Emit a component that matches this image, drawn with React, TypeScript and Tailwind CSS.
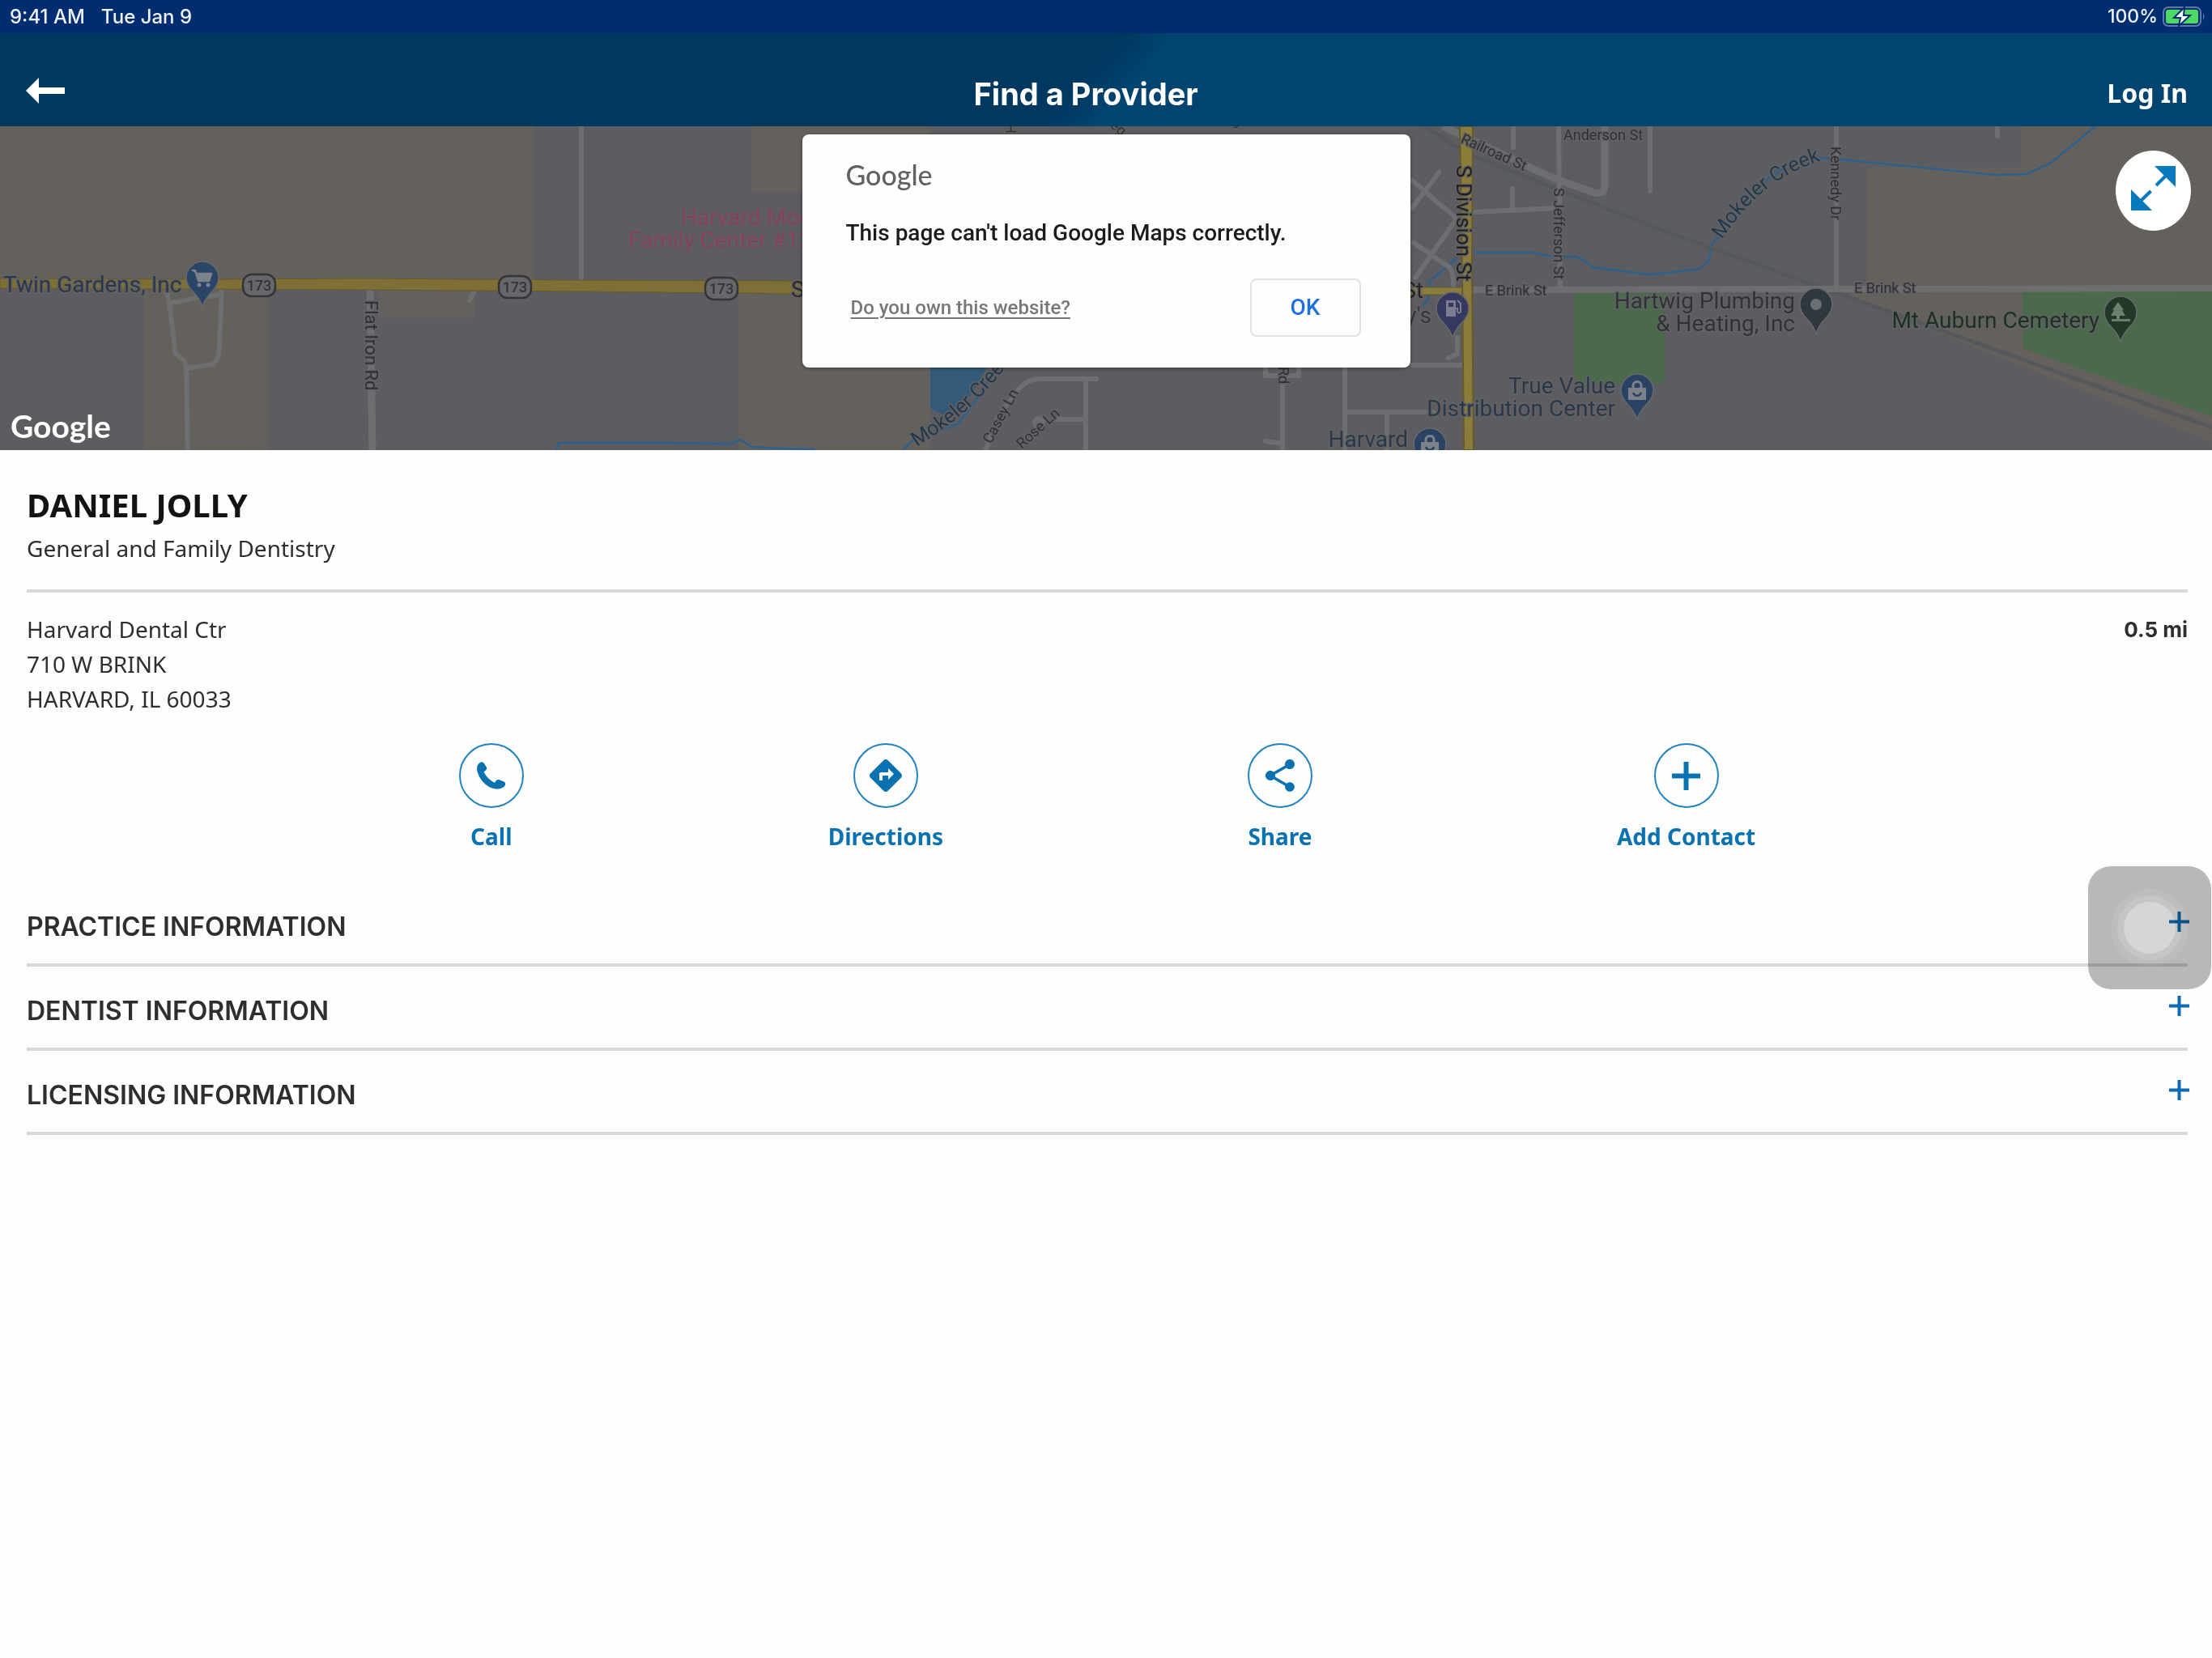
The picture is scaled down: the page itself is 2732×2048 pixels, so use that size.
import React from "react";
import { MdDirections, MdShare } from "react-icons/md";

const FIELD = "#64605c";
const ROAD = "#6c6e70";
const CREEK = "#2c618d";
const YELLOW = "#7d6f36";

function Pin({ x, y, color, children }: { x: number; y: number; color: string; children?: React.ReactNode }) {
  return (
    <g transform={`translate(${x} ${y})`}>
      <path
        d="M0 -20C-11 -20 -20 -11 -20 0C-20 7 -17 12 -12 17C-6 23 -3 27 0 36C3 27 6 23 12 17C17 12 20 7 20 0C20 -11 11 -20 0 -20Z"
        fill={color}
        stroke="#68696c"
        strokeWidth="1.5"
      />
      {children}
    </g>
  );
}

function BagGlyph() {
  return (
    <g>
      <path d="M-11 -3H11V12H-11Z" fill="#7d828a" />
      <path d="M-5 -3V-6C-5 -12 5 -12 5 -6V-3" fill="none" stroke="#7d828a" strokeWidth="3" />
      <path d="M-5 3C-3 8 3 8 5 3" fill="none" stroke="#2a4264" strokeWidth="2.5" />
    </g>
  );
}

function Shield({ x, y }: { x: number; y: number }) {
  return (
    <g>
      <rect x={x - 20} y={y - 13} width="40" height="27" rx="11" fill="#66676a" stroke="#343537" strokeWidth="2.5" />
      <text x={x} y={y + 7} textAnchor="middle" fontSize="18" fontWeight="500" fill="#333437">
        173
      </text>
    </g>
  );
}

function MapCanvas() {
  return (
    <svg
      className="block h-full w-full"
      viewBox="0 156 2732 400"
      preserveAspectRatio="xMidYMid slice"
      fontFamily="Roboto, sans-serif"
      role="img"
      aria-label="Map"
    >
      <defs>
        <path id="creek-east" d="M2127 296C2150 262 2182 217 2260 195" />
        <path id="creek-south" d="M1132 552C1178 522 1208 502 1260 430" />
      </defs>
      <rect x="0" y="156" width="2732" height="400" fill="#5d5d61" />
      <g fill={FIELD}>
        <rect x="0" y="156" width="660" height="190" />
        <rect x="178" y="356" width="153" height="200" />
        <rect x="467" y="356" width="119" height="37" />
        <rect x="928" y="156" width="222" height="81" />
        <rect x="912" y="360" width="237" height="196" />
        <path d="M2496 156H2732V354H2306V207H2496Z" />
        <path d="M2266 360H2732V546Z" />
      </g>
      <g fill="#4b6a4b">
        <path d="M1944 362H2056V466Q2056 474 2048 474H1958Q1944 474 1944 460Z" />
        <path d="M2498 360H2732V514L2498 430Z" />
      </g>
      <path d="M1149 440H1224L1218 456L1193 497Q1180 508 1166 512Q1154 510 1149 503Z" fill="#345a7a" />
      <g fill="none" stroke={CREEK} strokeWidth="2.5">
        <path d="M687 556L690 547H814L903 548L914 543L928 552L966 554L1006 555" />
        <path d="M1115 556L1126 545L1184 523L1211 487L1225 463" />
        <path d="M1820 312H1891L1918 317L1945 317L1954 320L1967 330L2036 339L2060 337L2099 332L2110 323L2115 300L2184 221L2211 202L2246 195L2273 197L2465 216L2503 215L2532 202L2588 156" />
        <path d="M1800 318L1766 347L1764 370L1757 377" />
      </g>
      <g fill="none" stroke="#55585c" strokeWidth="5">
        <path d="M1760 156L1812 190L2060 287L2255 357L2732 528" />
      </g>
      <g fill="none" stroke={ROAD} strokeWidth="6" strokeLinejoin="round" strokeLinecap="round">
        <path d="M206 361L209 375L217 437L228 446L230 455L232 560" />
        <path d="M274 354L271 429Q270 446 262 450L230 455" />
        <path d="M209 375L243 368L272 364" />
        <path d="M586 359L580 371" />
        <path d="M718 150V347" />
        <path d="M1354 468H1285Q1268 468 1256 483L1232 516L1216 560" />
        <path d="M1341 468V560M1305 518H1341" />
        <path d="M1744 257L1777 213M1744 223L1797 268M1746 300L1790 330Q1795 335 1795 353M1748 343L1797 273" />
        <path d="M1869 150V182M2038 150V236M1868 233V258M1820 262L1925 257" />
        <path d="M1800 417V437L1789 442M1744 451H1806M1661 450V560M1663 509H1770M1713 512V560" />
        <path d="M1584 470V560M1563 450V464H1604V450M1563 545L1584 548" />
        <path d="M2467 150V168M2268 150V357M1925 150L1927 357" />
      </g>
      <g fill="none" stroke={ROAD} strokeWidth="9" strokeLinejoin="round">
        <path d="M457 350L460 560" />
        <path d="M1782 156L1918 220L1969 238Q1981 240 1982 231V150" />
        <path d="M1820 358L2732 356" strokeWidth="8" />
      </g>
      <circle cx="1283" cy="522" r="8" fill={ROAD} />
      <path d="M0 344L250 345L450 344L718 346L992 347V363L718 360L450 358L0 356Z" fill={YELLOW} stroke="#66592b" strokeWidth="1" />
      <path d="M1740 355H1806V364H1740Z" fill="#8a7c3a" stroke="#66592b" strokeWidth="1" />
      <path d="M1803 156H1819L1818 330L1820 556H1808L1806 340Z" fill="#8a7c3a" stroke="#66592b" strokeWidth="2" />
      <Shield x={320} y={352} />
      <Shield x={636} y={354} />
      <Shield x={891} y={356} />

      <g stroke="#626266" strokeWidth="3" paintOrder="stroke" strokeLinejoin="round">
        <g fontSize="28">
          <text x="4" y="361" fill="#2b3947">Twin Gardens, Inc</text>
          <g fill="#86405f" strokeWidth="1">
            <text x="841" y="278">Harvard Moo</text>
            <text x="776" y="306">Family Center #12</text>
          </g>
          <text x="977" y="367" fill="#2c2b2c">S</text>
          <text x="1758" y="368" textAnchor="end" fill="#26251f">St</text>
          <text x="1768" y="399" textAnchor="end" fill="#34353f">y's</text>
          <g textAnchor="end">
            <text x="2217" y="381" fill="#2f3337">Hartwig Plumbing</text>
            <text x="2217" y="409" fill="#2f3337">&amp; Heating, Inc</text>
            <text x="1995" y="486" fill="#2a3848">True Value</text>
            <text x="1995" y="514" fill="#2a3848">Distribution Center</text>
            <text x="1739" y="552" fill="#2a3848">Harvard</text>
            <text x="2593" y="405" fill="#1d3122">Mt Auburn Cemetery</text>
          </g>
        </g>
        <g fontSize="18" fill="#2f3032">
          <text x="1834" y="365">E Brink St</text>
          <text x="2290" y="362">E Brink St</text>
          <text x="1931" y="173">Anderson St</text>
          <text transform="translate(1803 176) rotate(24)">Railroad St</text>
          <text transform="translate(1919 232) rotate(90)">S Jefferson St</text>
          <text transform="translate(2261 181) rotate(90)">Kennedy Dr</text>
          <text transform="translate(1579 453) rotate(90)">Rd</text>
          <text transform="translate(1224 549) rotate(-62)">Casey Ln</text>
          <text transform="translate(1262 555) rotate(-42)">Rose Ln</text>
          <text transform="translate(1242 152) rotate(90)">H</text>
          <text transform="translate(1370 156) rotate(40)">eg</text>
          <text transform="translate(1524 160) rotate(-35)">s</text>
        </g>
        <text transform="translate(451 371) rotate(90)" fontSize="22" fill="#2f3032">Flat Iron Rd</text>
        <text transform="translate(1799 204) rotate(90)" fontSize="26" fill="#1f1f1c">S Division St</text>
        <g fontSize="25" fill="#24384a">
          <text><textPath href="#creek-east">Mokeler Creek</textPath></text>
          <text><textPath href="#creek-south">Mokeler Creek</textPath></text>
        </g>
      </g>

      <Pin x={250} y={343} color="#2a4568">
        <path d="M-13 -9H-9L-5 4H8L11 -5H-7" fill="#7d828a" stroke="#7d828a" strokeWidth="2.5" strokeLinejoin="round" />
        <circle cx="-4" cy="9" r="2.5" fill="#7d828a" />
        <circle cx="7" cy="9" r="2.5" fill="#7d828a" />
      </Pin>
      <Pin x={1794} y={381} color="#37385f">
        <path d="M-8 -10H4V10H-8Z" fill="#7b7c90" />
        <path d="M-5 -7H1V-2H-5Z" fill="#37385f" />
        <path d="M6 -10L10 -6V4Q8 7 6 4V0H4" fill="none" stroke="#7b7c90" strokeWidth="2" />
      </Pin>
      <Pin x={2243} y={376} color="#30383f">
        <circle cx="0" cy="0" r="7" fill="#6d7073" />
      </Pin>
      <Pin x={2022} y={482} color="#2a4264">
        <BagGlyph />
      </Pin>
      <Pin x={1766} y={549} color="#2a4264">
        <BagGlyph />
      </Pin>
      <Pin x={2619} y={386} color="#22392a">
        <path d="M-3 -13L4 -3H2L6 4H-1V8H12V11H-11V8H-5V4H-12L-8 -3H-10Z" fill="#6b806e" />
      </Pin>

      <text x="13" y="541" fontFamily="Lato, sans-serif" fontWeight="700" fontSize="39" fill="#ffffff">
        Google
      </text>
    </svg>
  );
}

function StatusBar() {
  return (
    <div className="flex h-[41px] items-center justify-between bg-[#002d70] pr-2 pl-3 font-[Inter,sans-serif] text-[24px] font-medium text-[#eef2f8]">
      <div className="flex gap-5">
        <span>9:41 AM</span>
        <span>Tue Jan 9</span>
      </div>
      <div className="flex items-center gap-1.5">
        <span className="text-[23px]">100%</span>
        <svg width="53" height="25" viewBox="0 0 53 25" aria-label="Battery charging">
          <rect x="1" y="1" width="46" height="23" rx="6" fill="none" stroke="#5f78a8" strokeWidth="2" />
          <rect x="4" y="4" width="40" height="17" rx="3" fill="#4cd964" />
          <path d="M50 8Q53 12.500 50 17Z" fill="#5f78a8" />
          <path d="M27 1L14 14H22L20 24L34 11H26Z" fill="#ffffff" stroke="#002d70" strokeWidth="2" />
        </svg>
      </div>
    </div>
  );
}

function Header() {
  return (
    <header className="flex h-[115px] items-center justify-between bg-[linear-gradient(132deg,#003860_calc(50%_-_20px),#00446f_calc(50%_+_24px))] pt-8 pr-[30px] pl-8 text-white">
      <button type="button" aria-label="Back" className="pb-1.5">
        <svg width="48" height="32" viewBox="0 0 48 32" fill="currentColor">
          <path d="M0 16L16 0V12H48V20H16V32Z" />
        </svg>
      </button>
      <h1 className="pt-1 font-[Inter,sans-serif] text-[38px] font-bold">Find a Provider</h1>
      <button type="button" className="font-['Noto_Sans',sans-serif] text-[32px] font-bold">
        Log In
      </button>
    </header>
  );
}

function MapError() {
  return (
    <div
      role="dialog"
      aria-labelledby="map-error"
      className="absolute inset-x-0 top-[10px] mx-auto flex h-72 w-[751px] flex-col rounded-lg bg-[#fefefe] pr-[61px] pb-[38px] pl-[54px] font-[Roboto,sans-serif] shadow-[0_1px_4px_rgba(0,0,0,0.4)]"
    >
      <div className="mt-7 font-[Lato,sans-serif] text-[34px] leading-[44px] font-medium text-[#616161]">Google</div>
      <p id="map-error" className="mt-8 text-[28px] leading-9 font-medium text-[#1b1b1d]">
        This page can't load Google Maps correctly.
      </p>
      <div className="mt-auto flex items-center justify-between pl-[6px]">
        <a href="#" className="text-[24px] font-medium text-[#777779] underline underline-offset-4">
          Do you own this website?
        </a>
        <button type="button" className="h-[72px] w-[137px] rounded-lg border-2 border-[#dfe1e5] text-[28px] font-medium text-[#1f6fe0]">
          OK
        </button>
      </div>
    </div>
  );
}

function PhoneIcon() {
  return (
    <svg width="36" height="34" viewBox="0 0 36 34" fill="currentColor">
      <path d="M2 2.500Q6 -1.500 9 2L12 7Q13 9.500 8.500 12.500Q13 21.500 22 26Q24 21.500 27 22L33.500 24.500Q37 26.500 33.500 31Q26 36 16 31.500Q4 25 0.500 12Q-1 6 2 2.500Z" />
    </svg>
  );
}

function PlusIcon() {
  return (
    <svg width="35" height="35" viewBox="0 0 35 35" stroke="currentColor" strokeWidth="6">
      <path d="M17.500 0V35M0 17.500H35" />
    </svg>
  );
}

const actions = [
  { label: "Call", icon: <PhoneIcon /> },
  { label: "Directions", icon: <MdDirections className="size-12" /> },
  { label: "Share", icon: <MdShare className="size-12" /> },
  { label: "Add Contact", icon: <PlusIcon /> },
];

const sections = ["PRACTICE INFORMATION", "DENTIST INFORMATION", "LICENSING INFORMATION"];

export default function App() {
  return (
    <div className="relative min-h-screen bg-[#fefefe] font-['Noto_Sans',sans-serif] text-[#2f2d30]">
      <StatusBar />
      <Header />
      <section className="relative h-[400px] overflow-hidden">
        <MapCanvas />
        <MapError />
        <button
          type="button"
          aria-label="Expand map"
          className="absolute top-[30px] right-[26px] flex h-[99px] w-[93px] items-center justify-center rounded-[50%] bg-white pb-1.5 text-[#0779bd]"
        >
          <svg width="55" height="55" viewBox="0 0 55 55" fill="currentColor">
            <path d="M29 0H55V26Z" />
            <path d="M0 29V55H26Z" />
            <path d="M31 24L44 11M24.500 31L11 44" stroke="currentColor" strokeWidth="4" />
          </svg>
        </button>
      </section>

      <main className="pr-[30px] pl-[33px] text-[28px] leading-[43px]">
        <div className="border-b-4 border-[#d9d7d8] pt-11 pb-[29px]">
          <h2 className="text-[40px] leading-[48px] font-bold text-[#131314]">DANIEL JOLLY</h2>
          <p className="mt-2">General and Family Dentistry</p>
        </div>
        <div className="flex items-start justify-between pt-6">
          <address className="not-italic">
            Harvard Dental Ctr
            <br />
            710 W BRINK
            <br />
            HARVARD, IL 60033
          </address>
          <span className="font-[Inter,sans-serif] text-[26px] font-bold">0.5 mi</span>
        </div>
        <div className="mx-auto mt-[33px] flex w-3/5 justify-between">
          {actions.map(({ label, icon }) => (
            <button key={label} type="button" className="flex flex-col items-center text-[#0b72b2]">
              <span className="flex size-20 items-center justify-center rounded-full border-2 border-[#2083bd]">
                {icon}
              </span>
              <span className="mt-[15px] leading-10 font-bold">{label}</span>
            </button>
          ))}
        </div>
        <div className="mt-[37px]">
          {sections.map((title) => (
            <h3 key={title}>
              <button
                type="button"
                aria-expanded="false"
                className="flex h-[104px] w-full items-center justify-between border-b-4 border-[#d9d7d8] pb-1 text-left"
              >
                <span className="pt-3 font-[Inter,sans-serif] text-[32px] font-semibold">{title}</span>
                <svg width="25" height="25" viewBox="0 0 25 25" className="-mr-0.5 text-[#0b6cb3]" stroke="currentColor" strokeWidth="4">
                  <path d="M12.500 0V25M0 12.500H25" />
                </svg>
              </button>
            </h3>
          ))}
        </div>
      </main>

      <button
        type="button"
        aria-label="Assistive touch"
        className="absolute top-[1070px] right-px flex size-[152px] items-center justify-center rounded-[28px] bg-[#bab8ba] mix-blend-multiply"
      >
        <span className="flex size-24 items-center justify-center rounded-full bg-[#bebebe]">
          <span className="flex size-20 items-center justify-center rounded-full bg-[#c6c6c6]">
            <span className="size-16 rounded-full bg-[#d7d7d7]" />
          </span>
        </span>
      </button>
    </div>
  );
}
